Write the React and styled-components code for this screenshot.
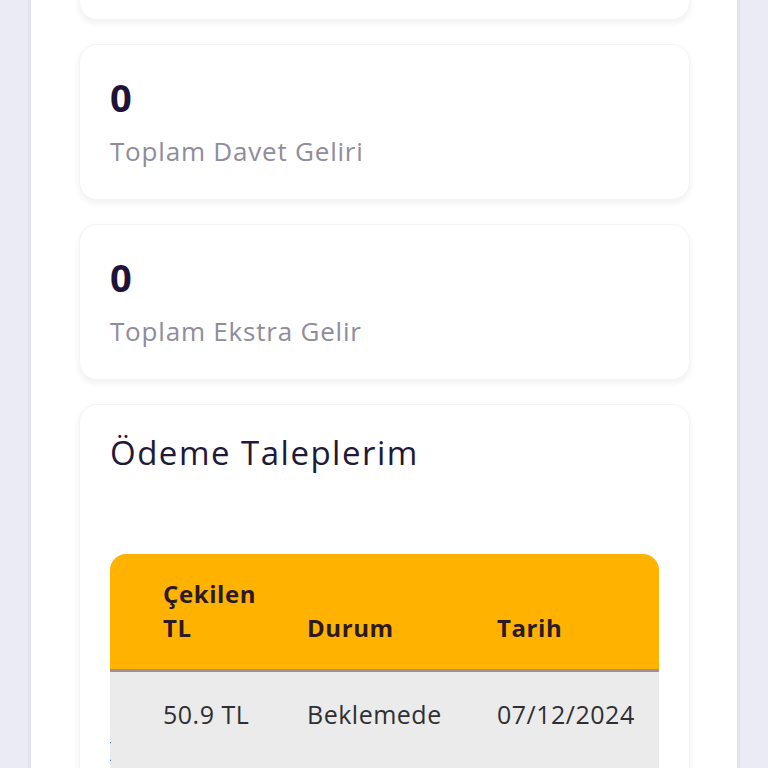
import styled, {createGlobalStyle} from 'styled-components'

const rows = [
  {amount: '50.9 TL', status: 'Beklemede', date: '07/12/2024'},
]

// Earnings page (scrolled)
export default () => {
  return (
    <>
      <GlobalStyle/>
      <Column>
        <Card/>
        <Card>
          <Value>0</Value>
          <Label>Toplam Davet Geliri</Label>
        </Card>
        <Card>
          <Value>0</Value>
          <Label>Toplam Ekstra Gelir</Label>
        </Card>
        <Card $open>
          <Title>Ödeme Taleplerim</Title>
          <Table>
            <HeadRow>
              <HeadCell>Çekilen<br/>TL</HeadCell>
              <HeadCell>Durum</HeadCell>
              <HeadCell>Tarih</HeadCell>
            </HeadRow>
            {rows.map((r, i) => (
              <BodyRow key={i}>
                <Cell>{r.amount}</Cell>
                <Cell>{r.status}</Cell>
                <Cell>{r.date}</Cell>
                <Clipped>(</Clipped>
              </BodyRow>
            ))}
          </Table>
        </Card>
      </Column>
    </>
  )
}

// Styled Components
const GlobalStyle = createGlobalStyle`
  html, body {
    margin: 0;
    height: 768px;
    overflow: hidden;
    background: #ebebf6;
    font-family: "Open Sans", "DejaVu Sans", sans-serif;
  }
`

const Column = styled.div`
  width: 712px;
  margin-left: 28px;
  margin-top: -136px;
  min-height: 1000px;
  padding: 0 47px 0 48px;
  box-sizing: border-box;
  background: #fff;
  border-left: 3px solid #e3e3ec;
  border-right: 3px solid #e3e3ec;
  display: flex;
  flex-direction: column;
  gap: 24px;
`

const Card = styled.div`
  height: ${p => p.$open ? 'auto' : '156px'};
  box-sizing: border-box;
  padding: 29px 30px 0;
  background: #fff;
  border-radius: 18px;
  border: 1px solid #f4f4f6;
  box-shadow: 0 3px 6px rgba(40, 30, 70, 0.07);
`

const Value = styled.div`
  color: #1f1438;
  font-size: 38px;
  font-weight: 700;
  line-height: 46px;
`

const Label = styled.div`
  margin-top: 14px;
  color: #8f8c9b;
  font-size: 26px;
  letter-spacing: 0.8px;
  line-height: 34px;
`

const Title = styled.div`
  margin-top: -3px;
  color: #221838;
  font-size: 33px;
  letter-spacing: 1.5px;
  line-height: 44px;
`

const Table = styled.div`
  margin-top: 79px;
  border-radius: 16px 16px 0 0;
  overflow: hidden;
  width: 549px;
`

const HeadRow = styled.div`
  display: grid;
  grid-template-columns: 144px 190px 1fr;
  align-items: end;
  height: 118px;
  box-sizing: border-box;
  padding: 0 0 24px 53px;
  background: #ffb300;
  border-bottom: 3px solid #9d9096;
`

const HeadCell = styled.div`
  color: #2b1a26;
  font-size: 24px;
  font-weight: 700;
  letter-spacing: 0.6px;
  line-height: 34px;
`

const BodyRow = styled.div`
  position: relative;
  display: grid;
  grid-template-columns: 144px 190px 1fr;
  height: 120px;
  padding: 25px 0 0 53px;
  background: #ebebeb;
`

const Cell = styled.div`
  color: #2f2f33;
  font-size: 25px;
  letter-spacing: 0.5px;
  line-height: 34px;
`

const Clipped = styled.span`
  position: absolute;
  left: -5px;
  top: 62px;
  color: #222;
  font-size: 22px;
`
